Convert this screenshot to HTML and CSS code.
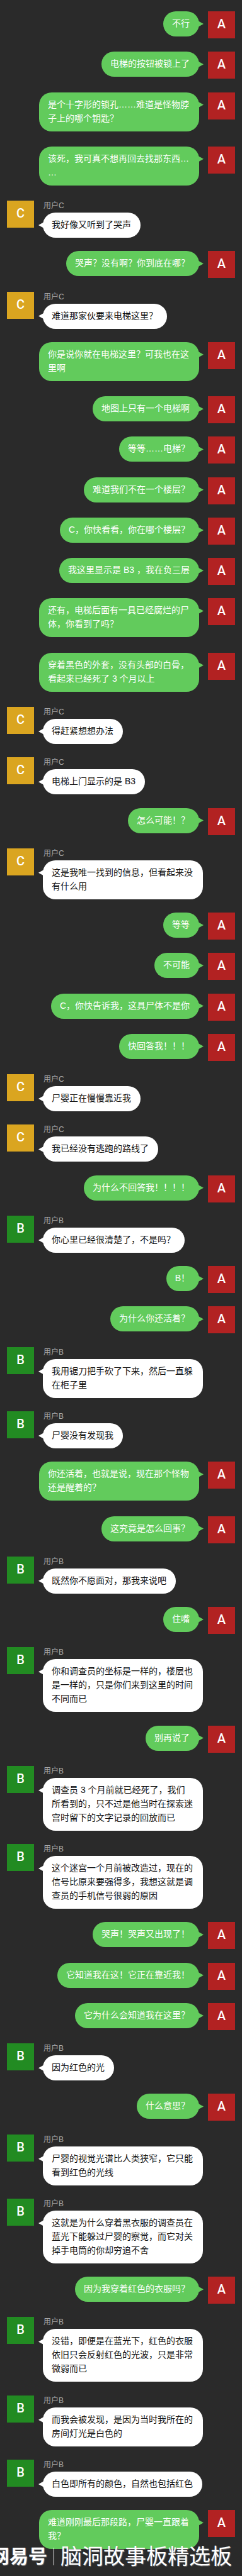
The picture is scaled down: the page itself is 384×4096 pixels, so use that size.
FILE: index.html
```html
<!DOCTYPE html>
<html lang="zh-CN">
<head>
<meta charset="utf-8">
<meta name="viewport" content="width=device-width, initial-scale=1">
<title>聊天记录</title>
<link rel="stylesheet" href="styles.css">
</head>
<body>
<main class="chat">
<article class="msg me"><div class="avatar">A</div><p class="bubble">不行</p></article>
<article class="msg me"><div class="avatar">A</div><p class="bubble">电梯的按钮被锁上了</p></article>
<article class="msg me"><div class="avatar">A</div><p class="bubble">是个十字形的锁孔……难道是怪物脖子上的哪个钥匙？</p></article>
<article class="msg me"><div class="avatar">A</div><p class="bubble">该死，我可真不想再回去找那东西…<wbr>…</p></article>
<article class="msg user-c"><div class="avatar">C</div><div class="body"><h2 class="name">用户C</h2><p class="bubble">我好像又听到了哭声</p></div></article>
<article class="msg me"><div class="avatar">A</div><p class="bubble">哭声？没有啊？你到底在哪？</p></article>
<article class="msg user-c"><div class="avatar">C</div><div class="body"><h2 class="name">用户C</h2><p class="bubble">难道那家伙要来电梯这里？</p></div></article>
<article class="msg me"><div class="avatar">A</div><p class="bubble">你是说你就在电梯这里？可我也在这里啊</p></article>
<article class="msg me"><div class="avatar">A</div><p class="bubble">地图上只有一个电梯啊</p></article>
<article class="msg me"><div class="avatar">A</div><p class="bubble">等等……电梯？</p></article>
<article class="msg me"><div class="avatar">A</div><p class="bubble">难道我们不在一个楼层？</p></article>
<article class="msg me"><div class="avatar">A</div><p class="bubble">C，你快看看，你在哪个楼层？</p></article>
<article class="msg me"><div class="avatar">A</div><p class="bubble">我这里显示是 B3 ，我在负三层</p></article>
<article class="msg me"><div class="avatar">A</div><p class="bubble">还有，电梯后面有一具已经腐烂的尸体，你看到了吗？</p></article>
<article class="msg me"><div class="avatar">A</div><p class="bubble">穿着黑色的外套，没有头部的白骨，看起来已经死了 3 个月以上</p></article>
<article class="msg user-c"><div class="avatar">C</div><div class="body"><h2 class="name">用户C</h2><p class="bubble">得赶紧想想办法</p></div></article>
<article class="msg user-c"><div class="avatar">C</div><div class="body"><h2 class="name">用户C</h2><p class="bubble">电梯上门显示的是 B3</p></div></article>
<article class="msg me"><div class="avatar">A</div><p class="bubble">怎么可能！？</p></article>
<article class="msg user-c"><div class="avatar">C</div><div class="body"><h2 class="name">用户C</h2><p class="bubble">这是我唯一找到的信息，但看起来没有什么用</p></div></article>
<article class="msg me"><div class="avatar">A</div><p class="bubble">等等</p></article>
<article class="msg me"><div class="avatar">A</div><p class="bubble">不可能</p></article>
<article class="msg me"><div class="avatar">A</div><p class="bubble">C，你快告诉我，这具尸体不是你</p></article>
<article class="msg me"><div class="avatar">A</div><p class="bubble">快回答我！！！</p></article>
<article class="msg user-c"><div class="avatar">C</div><div class="body"><h2 class="name">用户C</h2><p class="bubble">尸婴正在慢慢靠近我</p></div></article>
<article class="msg user-c"><div class="avatar">C</div><div class="body"><h2 class="name">用户C</h2><p class="bubble">我已经没有逃跑的路线了</p></div></article>
<article class="msg me"><div class="avatar">A</div><p class="bubble">为什么不回答我！！！！</p></article>
<article class="msg user-b"><div class="avatar">B</div><div class="body"><h2 class="name">用户B</h2><p class="bubble">你心里已经很清楚了，不是吗？</p></div></article>
<article class="msg me"><div class="avatar">A</div><p class="bubble">B！</p></article>
<article class="msg me"><div class="avatar">A</div><p class="bubble">为什么你还活着？</p></article>
<article class="msg user-b"><div class="avatar">B</div><div class="body"><h2 class="name">用户B</h2><p class="bubble">我用锯刀把手砍了下来，然后一直躲在柜子里</p></div></article>
<article class="msg user-b"><div class="avatar">B</div><div class="body"><h2 class="name">用户B</h2><p class="bubble">尸婴没有发现我</p></div></article>
<article class="msg me"><div class="avatar">A</div><p class="bubble">你还活着，也就是说，现在那个怪物还是醒着的？</p></article>
<article class="msg me"><div class="avatar">A</div><p class="bubble">这究竟是怎么回事？</p></article>
<article class="msg user-b"><div class="avatar">B</div><div class="body"><h2 class="name">用户B</h2><p class="bubble">既然你不愿面对，那我来说吧</p></div></article>
<article class="msg me"><div class="avatar">A</div><p class="bubble">住嘴</p></article>
<article class="msg user-b"><div class="avatar">B</div><div class="body"><h2 class="name">用户B</h2><p class="bubble">你和调查员的坐标是一样的，楼层也是一样的，只是你们来到这里的时间不同而已</p></div></article>
<article class="msg me"><div class="avatar">A</div><p class="bubble">别再说了</p></article>
<article class="msg user-b"><div class="avatar">B</div><div class="body"><h2 class="name">用户B</h2><p class="bubble">调查员 3 个月前就已经死了，我们所看到的，只不过是他当时在探索迷宫时留下的文字记录的回放而已</p></div></article>
<article class="msg user-b"><div class="avatar">B</div><div class="body"><h2 class="name">用户B</h2><p class="bubble">这个迷宫一个月前被改造过，现在的信号比原来要强得多，我想这就是调查员的手机信号很弱的原因</p></div></article>
<article class="msg me"><div class="avatar">A</div><p class="bubble">哭声！哭声又出现了！</p></article>
<article class="msg me"><div class="avatar">A</div><p class="bubble">它知道我在这！它正在靠近我！</p></article>
<article class="msg me"><div class="avatar">A</div><p class="bubble">它为什么会知道我在这里？</p></article>
<article class="msg user-b"><div class="avatar">B</div><div class="body"><h2 class="name">用户B</h2><p class="bubble">因为红色的光</p></div></article>
<article class="msg me"><div class="avatar">A</div><p class="bubble">什么意思？</p></article>
<article class="msg user-b"><div class="avatar">B</div><div class="body"><h2 class="name">用户B</h2><p class="bubble">尸婴的视觉光谱比人类狭窄，它只能看到红色的光线</p></div></article>
<article class="msg user-b"><div class="avatar">B</div><div class="body"><h2 class="name">用户B</h2><p class="bubble">这就是为什么穿着黑衣服的调查员在蓝光下能躲过尸婴的察觉，而它对关掉手电筒的你却穷追不舍</p></div></article>
<article class="msg me"><div class="avatar">A</div><p class="bubble">因为我穿着红色的衣服吗？</p></article>
<article class="msg user-b"><div class="avatar">B</div><div class="body"><h2 class="name">用户B</h2><p class="bubble">没错，即便是在蓝光下，红色的衣服依旧只会反射红色的光波，只是非常微弱而已</p></div></article>
<article class="msg user-b"><div class="avatar">B</div><div class="body"><h2 class="name">用户B</h2><p class="bubble">而我会被发现，是因为当时我所在的房间灯光是白色的</p></div></article>
<article class="msg user-b"><div class="avatar">B</div><div class="body"><h2 class="name">用户B</h2><p class="bubble">白色即所有的颜色，自然也包括红色</p></div></article>
<article class="msg me"><div class="avatar">A</div><p class="bubble">难道刚刚最后那段路，尸婴一直跟着我？</p></article>
<footer class="watermark"><span class="brand">网易号</span><span class="rule"></span><span>脑洞故事板精选板</span></footer>
</main>
</body>
</html>
```
FILE: styles.css
```css
* {
  box-sizing: border-box;
}

body {
  margin: 0;
  background: #2a2a2a;
  font-family: "Liberation Sans", "Noto Sans CJK SC", sans-serif;
  font-size: 14px;
  line-height: 22px;
}

/* Spare height is shared between the messages. */
.chat {
  position: relative;
  display: flex;
  flex-direction: column;
  justify-content: space-between;
  gap: 21px;
  min-height: 100vh;
  padding: 18px 11px 39px;
  overflow: hidden;
}

.msg {
  display: flex;
  align-items: flex-start;
  gap: 14px;
}

.me {
  flex-direction: row-reverse;
  padding-bottom: 3px;
}

.avatar {
  flex: none;
  width: 43px;
  height: 43px;
  background: #b22222;
  color: #fff;
  font-family: Roboto, sans-serif;
  font-size: 20px;
  font-weight: 500;
  line-height: 40px;
  text-align: center;
}

.me .avatar {
  margin-bottom: -3px;
}

.user-c .avatar {
  background: #daa520;
}

.user-b .avatar {
  background: #228b22;
}

.name {
  margin: 0 0 2px 1px;
  color: #aaa;
  font-size: 12px;
  font-weight: 400;
  line-height: 17px;
}

.bubble {
  position: relative;
  width: fit-content;
  max-width: 254px;
  margin: 0;
  padding: 8px 15px 10px 14px;
  border-radius: 20px;
  background: #fff;
  color: #111;
  line-break: anywhere;
}

.me .bubble {
  background: #62cb5c;
  color: #fff;
}

.bubble::before {
  content: "";
  position: absolute;
  top: 15px;
  left: -7px;
  width: 9px;
  height: 10px;
  background: inherit;
  clip-path: polygon(0 50%, 100% 0, 100% 100%);
}

.me .bubble::before {
  right: -7px;
  left: auto;
  clip-path: polygon(100% 50%, 0 0, 0 100%);
}

.watermark {
  position: absolute;
  right: 16px;
  bottom: 12px;
  display: flex;
  align-items: center;
  gap: 10px;
  color: #fff;
  font-size: 34px;
  line-height: 38px;
  white-space: nowrap;
  text-shadow: 1px 1px 1px #777;
}

.brand {
  font-size: 30px;
  font-weight: 700;
}

.rule {
  width: 1px;
  height: 28px;
  background: #fff;
}
```
